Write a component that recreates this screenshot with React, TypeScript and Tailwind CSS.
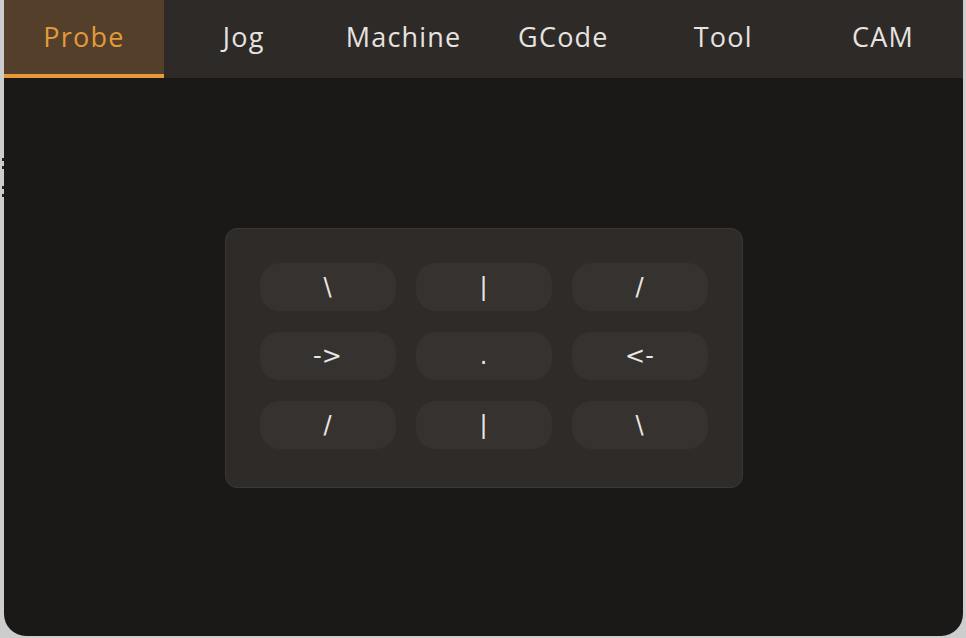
const tabs = ['Probe', 'Jog', 'Machine', 'GCode', 'Tool', 'CAM'];
const keys = ['\\', '|', '/', '->', '.', '<-', '/', '|', '\\'];

export default function App() {
  return (
    <div className="relative h-[638px] w-[966px] overflow-hidden bg-[#cdcdcd]" style={{ fontFamily: '"Open Sans", "Noto Sans", sans-serif' }}>
      {/* resize grip marks on the left edge */}
      <span className="absolute left-[2px] top-[158px] h-[3px] w-[2px] bg-[#222]" />
      <span className="absolute left-[2px] top-[166px] h-[3px] w-[2px] bg-[#222]" />
      <span className="absolute left-[2px] top-[186px] h-[3px] w-[2px] bg-[#222]" />
      <span className="absolute left-[2px] top-[194px] h-[3px] w-[2px] bg-[#222]" />

      <div className="ml-[4px] flex h-[636px] w-[959px] flex-col overflow-hidden rounded-b-[22px] bg-[#1b1918]">
        <div className="flex h-[78px] bg-[#2e2a27]">
          {tabs.map((t, i) => (
            <div
              key={t}
              className={
                i === 0
                  ? 'flex flex-1 items-center justify-center border-b-4 border-[#e8993a] bg-[#533f2a] text-[27px] font-medium tracking-[1.2px] text-[#e39a3b]'
                  : 'flex flex-1 items-center justify-center border-b-4 border-transparent text-[27px] font-medium tracking-[1.2px] text-[#e6e3e0]'
              }
            >
              {t}
            </div>
          ))}
        </div>

        <div className="flex flex-1 items-center justify-center pt-[2px]">
          <div className="grid grid-cols-[136px_136px_136px] gap-x-[20px] gap-y-[21px] rounded-[12px] border border-[#3a3634] bg-[#2e2b29] px-[34px] pt-[34px] pb-[38px]">
            {keys.map((k, i) => (
              <div
                key={i}
                className="flex h-[48px] items-center justify-center rounded-[20px] bg-[#353230] text-[24px] text-[#e8e6e4]"
                style={{ fontFamily: '"DejaVu Sans", sans-serif' }}
              >
                {k}
              </div>
            ))}
          </div>
        </div>
      </div>
    </div>
  );
}
